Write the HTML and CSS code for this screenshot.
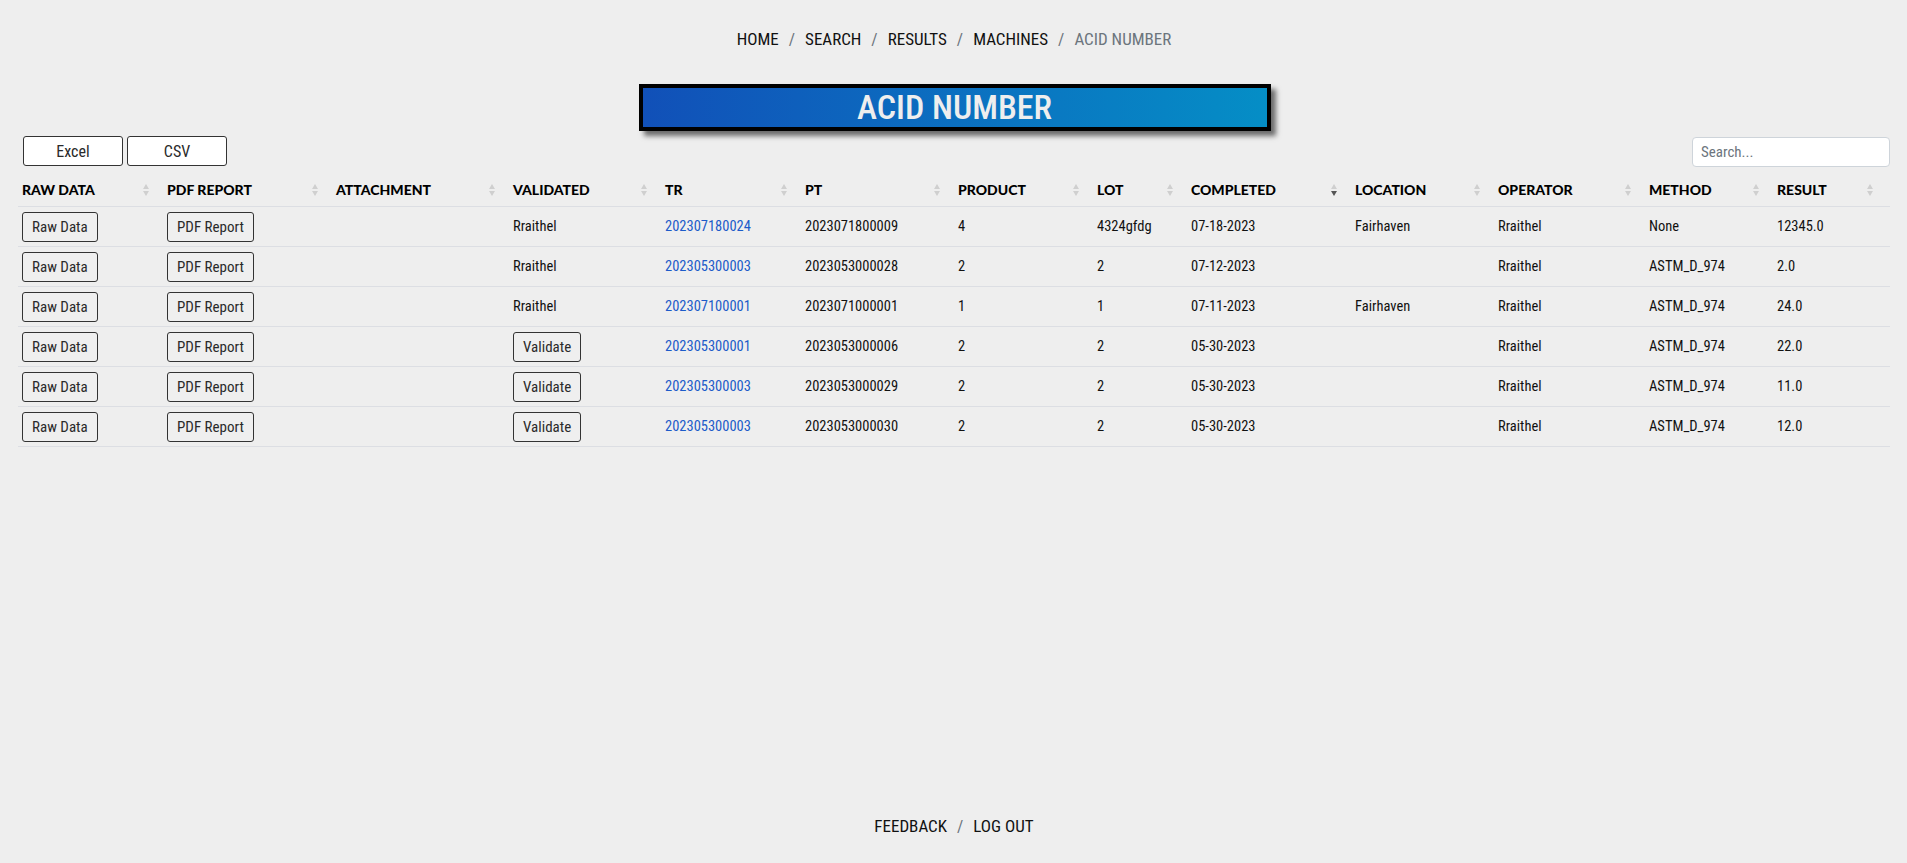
FILE: index.html
```html
<!DOCTYPE html>
<html lang="en">
<head>
<meta charset="utf-8">
<title>Acid Number</title>
<link rel="stylesheet" href="styles.css">
</head>
<body>
<div class="page">
  <nav class="crumbs">
    <a class="crumb" href="#">HOME</a><span class="sep">/</span>
    <a class="crumb" href="#">SEARCH</a><span class="sep">/</span>
    <a class="crumb" href="#">RESULTS</a><span class="sep">/</span>
    <a class="crumb" href="#">MACHINES</a><span class="sep">/</span>
    <span class="crumb active">ACID NUMBER</span>
  </nav>

  <div class="title-wrap">
    <h1 class="title">ACID NUMBER</h1>
  </div>

  <main class="content">
    <div class="controls">
      <div class="export">
        <button class="btn-export">Excel</button>
        <button class="btn-export">CSV</button>
      </div>
      <input class="search" type="text" placeholder="Search...">
    </div>

    <table class="grid">
      <thead>
        <tr>
          <th class="c1">RAW DATA</th>
          <th class="c2">PDF REPORT</th>
          <th class="c3">ATTACHMENT</th>
          <th class="c4">VALIDATED</th>
          <th class="c5">TR</th>
          <th class="c6">PT</th>
          <th class="c7">PRODUCT</th>
          <th class="c8">LOT</th>
          <th class="c9 sorted">COMPLETED</th>
          <th class="c10">LOCATION</th>
          <th class="c11">OPERATOR</th>
          <th class="c12">METHOD</th>
          <th class="c13">RESULT</th>
        </tr>
      </thead>
      <tbody>
        <tr>
          <td><button class="btn">Raw Data</button></td>
          <td><button class="btn">PDF Report</button></td>
          <td></td>
          <td>Rraithel</td>
          <td><a class="link" href="#">202307180024</a></td>
          <td>2023071800009</td>
          <td>4</td>
          <td>4324gfdg</td>
          <td>07-18-2023</td>
          <td>Fairhaven</td>
          <td>Rraithel</td>
          <td>None</td>
          <td>12345.0</td>
        </tr>
        <tr>
          <td><button class="btn">Raw Data</button></td>
          <td><button class="btn">PDF Report</button></td>
          <td></td>
          <td>Rraithel</td>
          <td><a class="link" href="#">202305300003</a></td>
          <td>2023053000028</td>
          <td>2</td>
          <td>2</td>
          <td>07-12-2023</td>
          <td></td>
          <td>Rraithel</td>
          <td>ASTM_D_974</td>
          <td>2.0</td>
        </tr>
        <tr>
          <td><button class="btn">Raw Data</button></td>
          <td><button class="btn">PDF Report</button></td>
          <td></td>
          <td>Rraithel</td>
          <td><a class="link" href="#">202307100001</a></td>
          <td>2023071000001</td>
          <td>1</td>
          <td>1</td>
          <td>07-11-2023</td>
          <td>Fairhaven</td>
          <td>Rraithel</td>
          <td>ASTM_D_974</td>
          <td>24.0</td>
        </tr>
        <tr>
          <td><button class="btn">Raw Data</button></td>
          <td><button class="btn">PDF Report</button></td>
          <td></td>
          <td><button class="btn">Validate</button></td>
          <td><a class="link" href="#">202305300001</a></td>
          <td>2023053000006</td>
          <td>2</td>
          <td>2</td>
          <td>05-30-2023</td>
          <td></td>
          <td>Rraithel</td>
          <td>ASTM_D_974</td>
          <td>22.0</td>
        </tr>
        <tr>
          <td><button class="btn">Raw Data</button></td>
          <td><button class="btn">PDF Report</button></td>
          <td></td>
          <td><button class="btn">Validate</button></td>
          <td><a class="link" href="#">202305300003</a></td>
          <td>2023053000029</td>
          <td>2</td>
          <td>2</td>
          <td>05-30-2023</td>
          <td></td>
          <td>Rraithel</td>
          <td>ASTM_D_974</td>
          <td>11.0</td>
        </tr>
        <tr>
          <td><button class="btn">Raw Data</button></td>
          <td><button class="btn">PDF Report</button></td>
          <td></td>
          <td><button class="btn">Validate</button></td>
          <td><a class="link" href="#">202305300003</a></td>
          <td>2023053000030</td>
          <td>2</td>
          <td>2</td>
          <td>05-30-2023</td>
          <td></td>
          <td>Rraithel</td>
          <td>ASTM_D_974</td>
          <td>12.0</td>
        </tr>
      </tbody>
    </table>
  </main>

  <footer class="foot">
    <a class="crumb" href="#">FEEDBACK</a><span class="sep">/</span><a class="crumb" href="#">LOG OUT</a>
  </footer>
</div>
</body>
</html>
```

FILE: styles.css
```css
* { box-sizing: border-box; }
html, body { margin: 0; padding: 0; }
body {
  background: #eeeeee;
  color: #111;
  font-family: "Roboto", "Open Sans", sans-serif;
  font-stretch: 75%;
}
button, input {
  font-family: "Roboto", "Open Sans", sans-serif;
  font-stretch: 75%;
  font-weight: 400;
}
.page {
  min-height: 863px;
  display: flex;
  flex-direction: column;
  padding: 0 17px 0 18px;
}
.crumbs {
  display: flex;
  justify-content: center;
  align-items: center;
  padding-top: 28px;
  height: 50px;
  font-size: 17px;
  line-height: 22px;
}
.crumb { color: #111; text-decoration: none; }
.crumb.active { color: #6c757d; }
.sep { color: #6c757d; padding: 0 10px; }

.title-wrap {
  margin-top: 34px;
  display: flex;
  justify-content: center;
  padding-left: 1px;
}
.title {
  margin: 0;
  width: 632px;
  height: 47px;
  border: 4px solid #000;
  background: linear-gradient(90deg, #1150b8 0%, #0b6fc0 50%, #058ec6 100%);
  box-shadow: 5px 5px 5px rgba(0,0,0,0.55);
  color: #eeeeee;
  font-size: 34px;
  font-weight: 500;
  line-height: 39px;
  text-align: center;
}
.content { flex: 1; }
.controls {
  display: flex;
  justify-content: space-between;
  align-items: flex-start;
  margin-top: 5px;
}
.export { display: flex; gap: 4px; padding-left: 5px; }
.btn-export {
  width: 100px;
  height: 30px;
  background: #fff;
  border: 1px solid #333;
  border-radius: 3px;
  font-size: 16px;
  color: #2a2a2a;
}
.search {
  width: 198px;
  height: 30px;
  margin-top: 1px;
  background: #fff;
  border: 1px solid #ced4da;
  border-radius: 4px;
  padding: 0 8px;
  font-size: 15px;
}
.search::placeholder { color: #6c757d; }

.grid {
  width: 1872px;
  border-collapse: collapse;
  table-layout: fixed;
  margin-top: 3px;
}
.grid th {
  position: relative;
  text-align: left;
  font-family: "Lato", sans-serif;
  font-stretch: normal;
  font-weight: 900;
  font-size: 14px;
  line-height: 20px;
  padding: 10px 4px 6px;
  border-bottom: 1px solid #dcdee3;
  color: #000;
}
.grid th::before, .grid th::after {
  content: "";
  position: absolute;
  right: 14px;
  width: 0; height: 0;
  border-left: 3px solid transparent;
  border-right: 3px solid transparent;
}
.grid th::before { top: 14px; border-bottom: 5px solid #cfcfcf; }
.grid th::after { top: 21px; border-top: 5px solid #cfcfcf; }
.grid th.sorted::after { border-top-color: #555; }
.grid th.c13::before, .grid th.c13::after { right: 17px; }

.c1 { width: 145px; } .c2 { width: 169px; } .c3 { width: 177px; }
.c4 { width: 152px; } .c5 { width: 140px; } .c6 { width: 153px; }
.c7 { width: 139px; } .c8 { width: 94px; } .c9 { width: 164px; }
.c10 { width: 143px; } .c11 { width: 151px; } .c12 { width: 128px; }
.c13 { width: 117px; }

.grid td {
  height: 40px;
  padding: 5px 4px 4px;
  border-bottom: 1px solid #dcdee3;
  font-size: 14.5px;
  line-height: 20px;
  vertical-align: middle;
  color: #111;
}
.btn {
  height: 30px;
  padding: 0 9px;
  background: #efefef;
  border: 1px solid #333;
  border-radius: 3px;
  font-size: 15px;
  color: #2a2a2a;
}
.link { color: #1c5bc9; text-decoration: none; }

.foot {
  display: flex;
  justify-content: center;
  font-size: 17px;
  line-height: 20px;
  padding-bottom: 27px;
}
```
